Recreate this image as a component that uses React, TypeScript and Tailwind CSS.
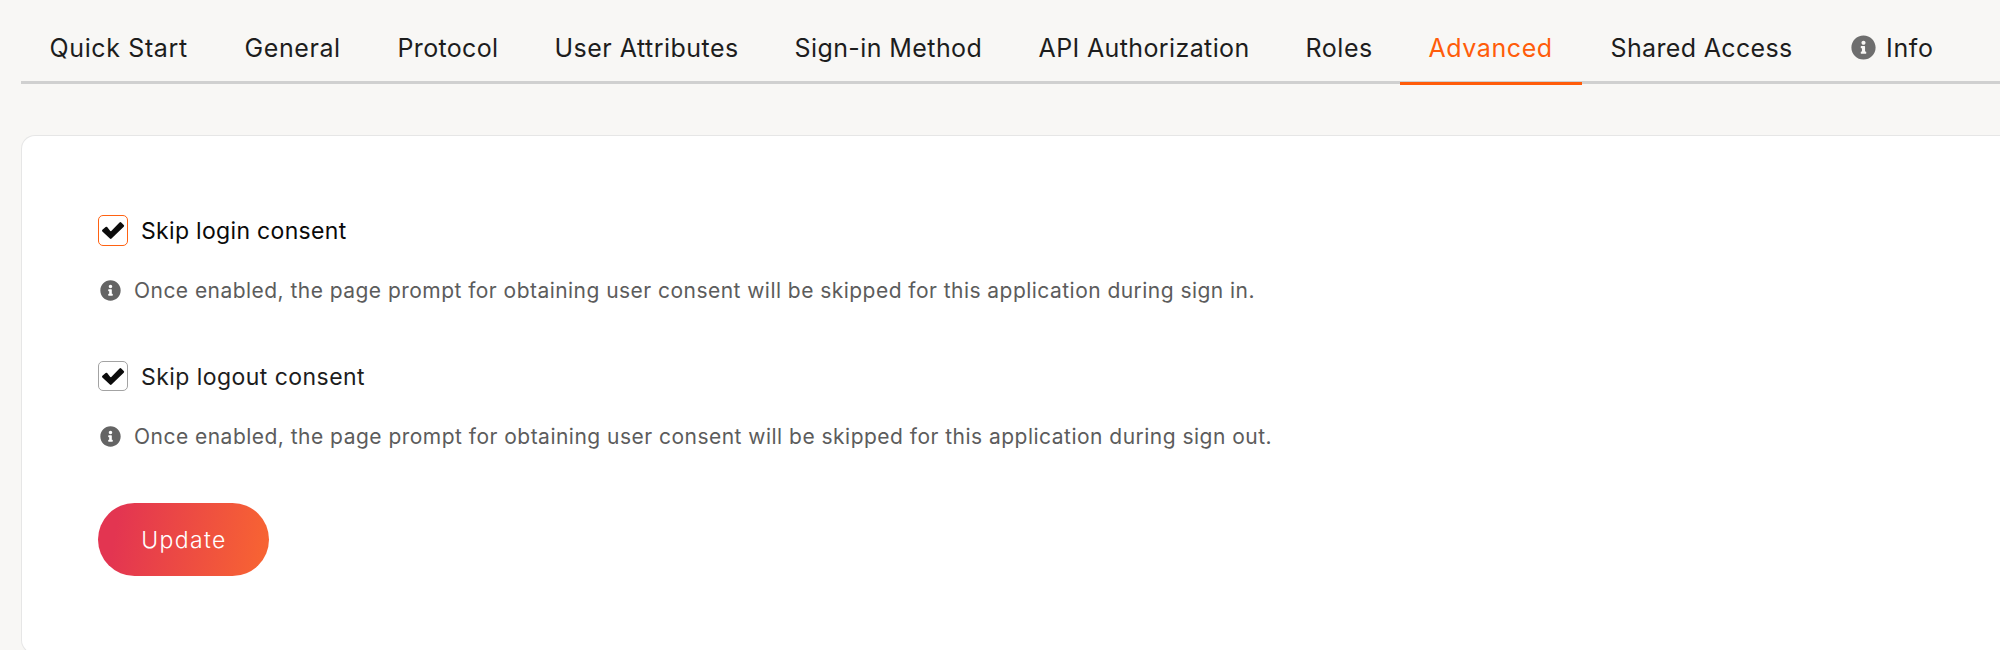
import { FaInfoCircle } from "react-icons/fa";

type Tab = { label: string; className: string; active?: boolean; info?: boolean };

const tabs: Tab[] = [
  { label: "Quick Start", className: "w-[195px] tracking-[0.63px]" },
  { label: "General", className: "w-[153px] tracking-[0.58px]" },
  { label: "Protocol", className: "w-[157px] tracking-[0.34px]" },
  { label: "User Attributes", className: "w-[240px] tracking-[0.48px]" },
  { label: "Sign-in Method", className: "w-[244px] tracking-[0.41px]" },
  { label: "API Authorization", className: "w-[267px] tracking-[0.38px]" },
  { label: "Roles", className: "w-[123px] tracking-[0.54px]" },
  { label: "Advanced", className: "w-[182px] tracking-[0.58px]", active: true },
  { label: "Shared Access", className: "w-[239px] tracking-[0.35px]" },
  { label: "Info", className: "w-[145px] tracking-[0.67px]", info: true },
];

function CheckMark() {
  return (
    <svg viewBox="1 1 28 28" className="size-[28px] shrink-0 text-[#0c0c0c]">
      <path
        d="M5.2 15.7 8.4 12.9 12.7 18.4 22.4 8.3 24.9 10.8 12.7 22.7Z"
        fill="currentColor"
        stroke="currentColor"
        strokeWidth="2.4"
        strokeLinejoin="round"
      />
    </svg>
  );
}

function ConsentOption({
  label,
  help,
  focused,
  labelClass,
  helpClass,
}: {
  label: string;
  help: string;
  focused?: boolean;
  labelClass: string;
  helpClass: string;
}) {
  return (
    <div>
      <label className="flex h-[30px] items-center">
        <span
          className={`flex w-[30px] shrink-0 items-center justify-center rounded-[5px] border bg-white ${
            focused ? "h-[31px] border-[#ff6212]" : "h-[30px] border-[#a3a3a3]"
          }`}
        >
          <CheckMark />
        </span>
        <span className={`ml-[13px] pt-[2px] text-[23px] leading-[30px] whitespace-nowrap ${labelClass}`}>{label}</span>
      </label>
      <p className="mt-[34px] flex h-[22px] items-center pl-[2px] text-[#5c5c5c]">
        <FaInfoCircle className="size-[21px] shrink-0 text-[#646464]" />
        <span className={`ml-[13px] pt-[2px] text-[21px] leading-[22px] whitespace-nowrap ${helpClass}`}>{help}</span>
      </p>
    </div>
  );
}

export default function App() {
  return (
    <div className="h-[650px] w-full overflow-hidden bg-[#f8f7f5] pl-[21px] font-['Inter',sans-serif] text-[#1d1d1d]">
      <nav className="flex h-[84px] border-b-3 border-[#d0d0d0]">
        {tabs.map((tab) => (
          <a
            key={tab.label}
            className={`flex h-[85px] shrink-0 items-center border-b-3 pt-[14px] pl-[28.5px] text-[25px] whitespace-nowrap ${
              tab.active ? "border-[#ff5c0a] text-[#ff5c0a]" : "border-transparent"
            } ${tab.className}`}
          >
            {tab.info && <FaInfoCircle className="mr-[10px] mb-[1px] ml-[1.5px] size-[25px] text-[#6e6e6e]" />}
            <span className="pt-[2px]">{tab.label}</span>
          </a>
        ))}
      </nav>

      <main className="mt-[51px] h-[519px] rounded-l-[14px] border border-r-0 border-[#e6e6e6] bg-white pt-[79px] pl-[76px]">
        <div className="flex flex-col gap-[60px]">
          <ConsentOption
            focused
            label="Skip login consent"
            help="Once enabled, the page prompt for obtaining user consent will be skipped for this application during sign in."
            labelClass="tracking-[0.32px] text-[#0a0a0a]"
            helpClass="tracking-[0.459px]"
          />
          <ConsentOption
            label="Skip logout consent"
            help="Once enabled, the page prompt for obtaining user consent will be skipped for this application during sign out."
            labelClass="tracking-[0.45px]"
            helpClass="tracking-[0.479px]"
          />
        </div>
        <button className="mt-[56px] flex h-[73px] w-[171px] items-center justify-center rounded-full bg-[linear-gradient(100deg,#e33551_12%,#f76333_95%)] pt-[2px] pl-[1px] text-[23px] font-light tracking-[1.4px] text-white">
          Update
        </button>
      </main>
    </div>
  );
}
